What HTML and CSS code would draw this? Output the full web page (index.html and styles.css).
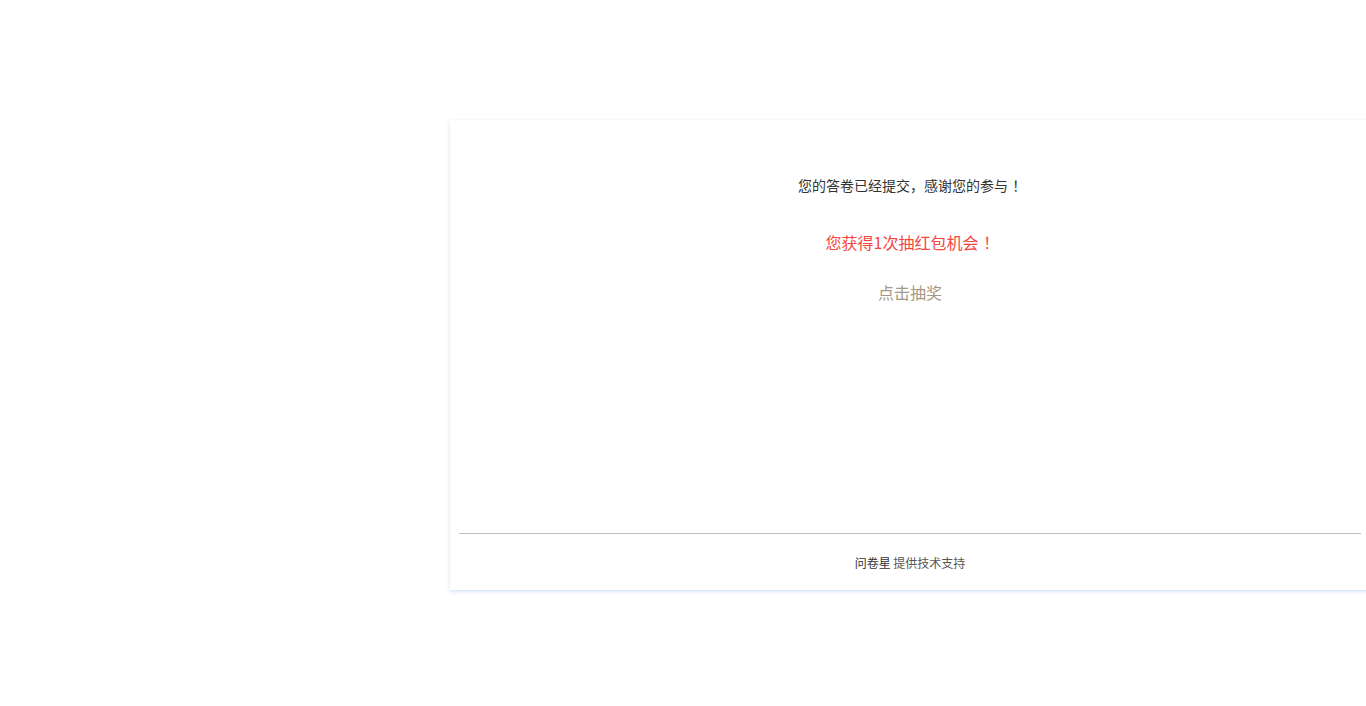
FILE: index.html
```html
<!DOCTYPE html>
<html lang="zh-CN">
<head>
<meta charset="utf-8">
<title>问卷星</title>
<link rel="stylesheet" href="styles.css">
</head>
<body>
<div class="page">
  <div class="card">
    <div class="content">
      <p class="thanks">您的答卷已经提交，感谢您的参与<span class="fw">！</span></p>
      <p class="prize">您获得1次抽红包机会<span class="fw">！</span></p>
      <a class="draw" href="#">点击抽奖</a>
    </div>
    <div class="footer">
      <span class="brand">问卷星</span> 提供技术支持
    </div>
  </div>
</div>
</body>
</html>
```
FILE: styles.css
```css
html {
  overflow: hidden;
}
body {
  margin: 0;
  padding: 0;
  background: #fff;
  font-family: "Noto Sans CJK SC", "Liberation Sans", sans-serif;
  color: #333;
}
.page {
  width: 1370px;
  padding: 120px 0 40px;
}
.card {
  margin-left: 450px;
  width: 920px;
  box-sizing: border-box;
  padding: 0 9px 17px;
  background: #fff;
  box-shadow: 0 1px 3px rgba(40, 100, 230, 0.16), 0 2px 5px rgba(40, 100, 230, 0.08);
}
.content {
  height: 414px;
  box-sizing: border-box;
  padding-top: 55px;
  text-align: center;
  border-bottom: 1px solid #bdbdbd;
}
.fw {
  display: inline-block;
  padding-left: 0.3em;
  width: 0.7em;
  text-align: left;
}
.thanks {
  margin: 0;
  font-size: 14px;
  line-height: 20px;
  color: #333;
}
.prize {
  margin: 35px 0 0;
  font-size: 16px;
  line-height: 24px;
  color: #f5463f;
}
.draw {
  display: inline-block;
  margin-top: 26px;
  font-size: 16px;
  line-height: 24px;
  color: #a39884;
  text-decoration: none;
}
.footer {
  margin-top: 19px;
  text-align: center;
  font-size: 12px;
  line-height: 20px;
  color: #555;
}
.brand {
  color: #333;
}
```
